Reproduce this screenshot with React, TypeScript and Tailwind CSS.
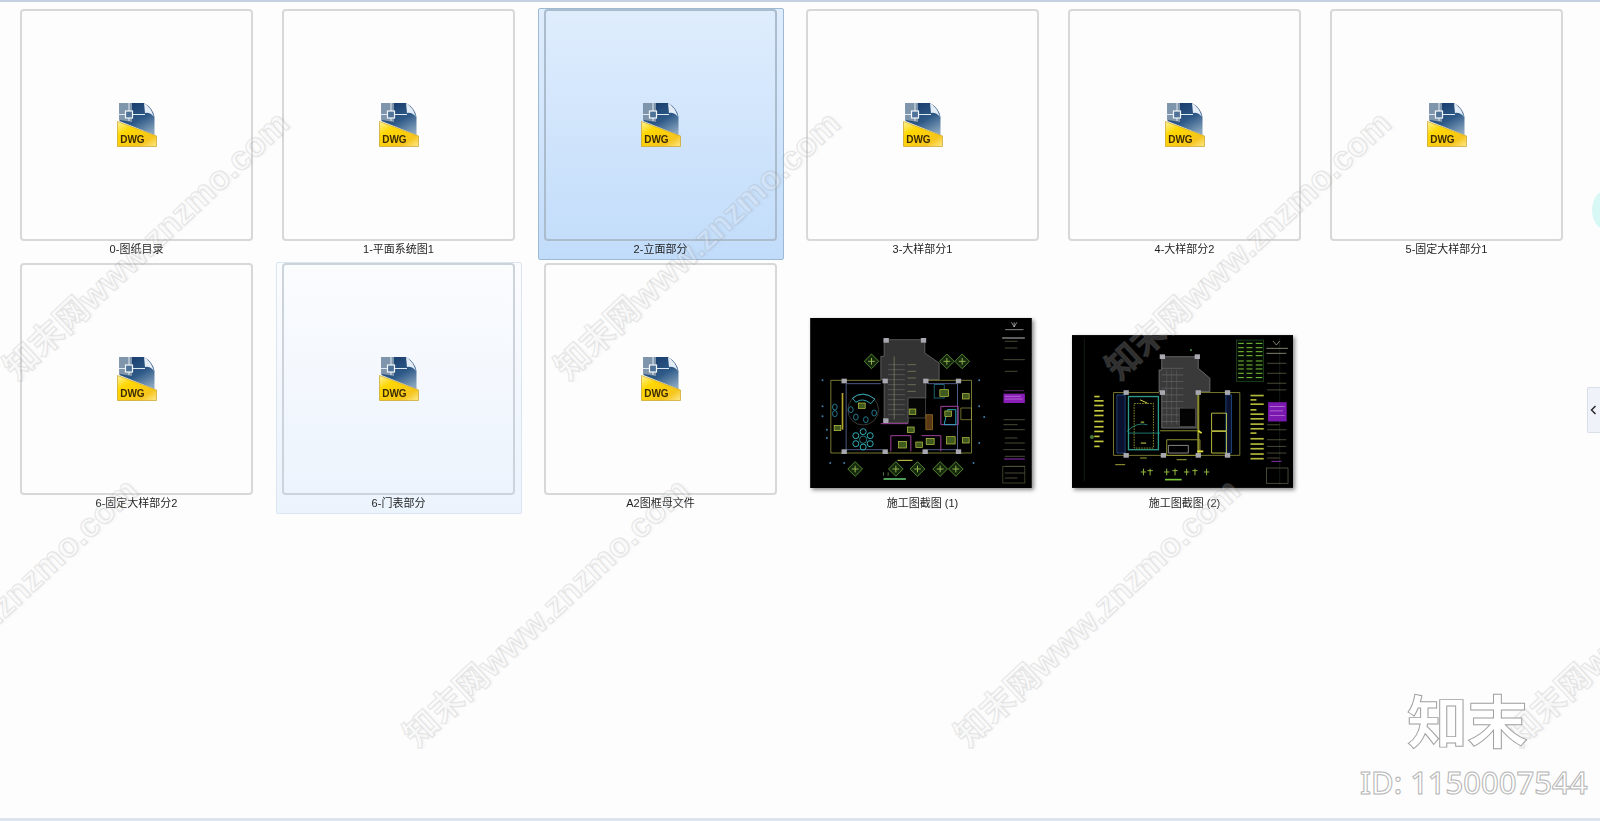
import React from "react";

type TileState = "normal" | "selected" | "hover";
type Item = { label: string; state?: TileState; image?: 1 | 2 };

const items: Item[] = [
  { label: "0-图纸目录" },
  { label: "1-平面系统图1" },
  { label: "2-立面部分", state: "selected" },
  { label: "3-大样部分1" },
  { label: "4-大样部分2" },
  { label: "5-固定大样部分1" },
  { label: "6-固定大样部分2" },
  { label: "6-门表部分", state: "hover" },
  { label: "A2图框母文件" },
  { label: "施工图截图 (1)", image: 1 },
  { label: "施工图截图 (2)", image: 2 },
];

const watermarkPositions = [
  "left-[146px] top-[245px]",
  "left-[697px] top-[245px]",
  "left-[1248px] top-[245px]",
  "left-[-5px] top-[612px]",
  "left-[546px] top-[612px]",
  "left-[1097px] top-[612px]",
  "left-[1648px] top-[612px]",
];

function DwgIcon() {
  return (
    <svg width="40" height="44" viewBox="0 0 40 44" className="blur-[0.35px]">
      <defs>
        <linearGradient id="dwgBlue" x1="0.2" y1="0" x2="0.8" y2="1">
          <stop offset="0" stopColor="#173a6b" />
          <stop offset="0.55" stopColor="#2f5a88" />
          <stop offset="1" stopColor="#8aa6bf" />
        </linearGradient>
        <linearGradient id="dwgYellow" x1="0" y1="0" x2="1" y2="1">
          <stop offset="0" stopColor="#fff3a0" />
          <stop offset="0.3" stopColor="#ffd700" />
          <stop offset="0.75" stopColor="#f6c51c" />
          <stop offset="1" stopColor="#fde98a" />
        </linearGradient>
      </defs>
      <path d="M2.5 0H27Q36 5 37.5 14V32L2.5 18Z" fill="url(#dwgBlue)" />
      <path d="M2.5 0H15V19L2.5 17Z" fill="#7e95ab" />
      <path d="M27 0Q34 4 37 14Q33 9 28 10Z" fill="#e4edf5" />
      <path d="M2 11.5H28M12 0V18" stroke="#dfe9f2" strokeWidth="1" fill="none" />
      <rect x="8.5" y="8" width="7" height="7" fill="#4f7398" stroke="#f3f7fb" strokeWidth="1.2" />
      <path d="M0.5 18.5L39.5 33V43.5H0.5Z" fill="url(#dwgYellow)" stroke="#c9a227" strokeWidth="0.7" />
      <text x="3.2" y="40" fontFamily="Liberation Sans, sans-serif" fontWeight="700" fontSize="10" fill="#3b2a05">
        DWG
      </text>
    </svg>
  );
}

const Diamond = ({ x, y, c = "#5f9a38" }: { x: number; y: number; c?: string }) => (
  <g>
    <path d={`M${x} ${y - 22}L${x + 22} ${y}L${x} ${y + 22}L${x - 22} ${y}Z`} fill="#16290e" stroke={c} strokeWidth="2.5" />
    <path d={`M${x - 10} ${y}H${x + 10}M${x} ${y - 10}V${y + 10}`} stroke="#8fb44c" strokeWidth="3" />
  </g>
);

const Furn = ({ x, y, w = 20, h = 16 }: { x: number; y: number; w?: number; h?: number }) => (
  <rect x={x - w / 2} y={y - h / 2} width={w} height={h} fill="#3f5a1c" stroke="#c8cf48" strokeWidth="2" />
);

const Col = ({ x, y }: { x: number; y: number }) => <rect x={x - 8} y={y - 7} width="16" height="14" fill="#a8a8b0" />;

function Cad1() {
  const lines = [95, 115, 150, 185, 330, 345, 360, 385, 400, 420, 440, 470, 490, 505];
  return (
    <svg width="222" height="170" viewBox="28 25 665 510" className="shadow-[2px_2px_4px_rgba(0,0,0,0.45)]">
      <rect x="28" y="25" width="665" height="510" fill="#000" />
      <g className="blur-[0.6px]">
        <path d="M250 90H372V130L415 160V210H375V265H322V340H250V210H240V140H250Z" fill="#333" stroke="#777" strokeWidth="2" />
        {[165, 180, 195, 210, 225, 240, 255, 270, 285, 300, 315].map((y) => (
          <path key={y} d={`M262 ${y}H312`} stroke="#666" strokeWidth="2" />
        ))}
        <path d="M280 140V330M320 165H345M320 185H345M320 205H345M320 225H345M320 245H345" stroke="#8a8a6a" strokeWidth="2" />
        <rect x="322" y="265" width="52" height="60" fill="#050505" stroke="#555" strokeWidth="2" />
        <path d="M90 212H240M378 212H512V430H90V212" fill="none" stroke="#8f8e3a" strokeWidth="2.5" />
        <path d="M136 222H240M380 222H470M136 222V420H245M380 420H470V222" fill="none" stroke="#5d6c9c" strokeWidth="2.5" />
        <path d="M240 342H322M270 378H330V425M270 378V425M362 378H420V425M420 290H472V345H420Z" fill="none" stroke="#a0409c" strokeWidth="3" />
        <path d="M480 295H512V330H480Z" fill="none" stroke="#a3a23f" strokeWidth="2" />
        <path d="M125 250V360" stroke="#b2a52a" strokeWidth="5" />
        <circle cx="187" cy="300" r="46" fill="none" stroke="#555" strokeWidth="2" />
        <path d="M155 265Q185 240 222 268L210 282Q185 262 165 278Z" fill="none" stroke="#2aa6b0" strokeWidth="3" />
        {[[150, 300], [165, 322], [195, 330], [220, 310], [102, 292], [102, 312]].map(([x, y], i) => (
          <ellipse key={i} cx={x} cy={y} rx="7" ry="9" fill="none" stroke="#2a8fa8" strokeWidth="2.5" />
        ))}
        {[[187, 366], [165, 378], [208, 378], [165, 402], [208, 402], [187, 412]].map(([x, y], i) => (
          <circle key={i} cx={x} cy={y} r="9" fill="none" stroke="#2fb0b8" strokeWidth="3" />
        ))}
        <circle cx="187" cy="390" r="11" fill="none" stroke="#2fb0b8" strokeWidth="2" />
        <rect x="400" y="225" width="30" height="40" fill="none" stroke="#2a8fa8" strokeWidth="2" />
        <path d="M440 300H465V345H430Z" fill="none" stroke="#2fa6c0" strokeWidth="3" />
        <path d="M375 315H395V360H375Z" fill="#5a3a14" stroke="#a87a2a" strokeWidth="2" />
        {[[183, 288], [110, 355], [430, 250, 26, 20], [495, 260], [335, 306], [330, 360], [305, 405, 24, 20], [355, 405], [388, 395, 24, 18], [450, 392, 26, 22], [495, 392], [442, 312]].map(
          ([x, y, w, h], i) => <Furn key={i} x={x} y={y} w={w} h={h} />,
        )}
        {[[212, 155], [438, 155], [484, 155], [163, 478], [285, 478], [350, 478], [418, 478], [465, 478]].map(([x, y], i) => (
          <Diamond key={i} x={x} y={y} />
        ))}
        {[[130, 214], [253, 214], [375, 214], [473, 214], [130, 426], [253, 426], [373, 426], [473, 426], [256, 92], [368, 92], [255, 333]].map(([x, y], i) => (
          <Col key={i} x={x} y={y} />
        ))}
        <path d="M290 452H335" stroke="#d6d94a" strokeWidth="3" />
        <path d="M248 508H315" stroke="#5fc06a" strokeWidth="5" />
        <path d="M248 498V488M262 498V488" stroke="#7ab050" strokeWidth="2" />
        {[[65, 212], [65, 290], [65, 320], [78, 360], [78, 385], [88, 460], [130, 460], [535, 212], [535, 290], [550, 322], [535, 400], [518, 460]].map(([x, y], i) => (
          <circle key={i} cx={x} cy={y} r="3" fill="#3f7faa" />
        ))}
        <path d="M632 38L640 52L648 38M640 38V52M613 60H668" stroke="#ccc" strokeWidth="2" fill="none" />
        {lines.map((y) => (
          <path key={y} d={`M${y % 3 === 0 ? 608 : 612} ${y}H${y % 2 === 0 ? 672 : 650}`} stroke="#6c6c50" strokeWidth="2" />
        ))}
        <path d="M604 85H672" stroke="#bbb" strokeWidth="3" />
        <path d="M610 243H670" stroke="#8a3aa0" strokeWidth="2" />
        <rect x="608" y="252" width="64" height="28" fill="#8a1fb8" />
        <path d="M612 260H660M612 268H665" stroke="#c88ae0" strokeWidth="2" />
        <path d="M610 448H672" stroke="#9a2fc0" strokeWidth="3" />
        <rect x="606" y="470" width="66" height="50" fill="none" stroke="#5a5a40" strokeWidth="2" />
      </g>
    </svg>
  );
}

function Cad2() {
  const rightRows = [212, 225, 238, 255, 268, 282, 298, 312, 325, 342, 358, 372, 388, 402];
  const leftRows = [215, 228, 242, 258, 272, 290, 306, 320, 335, 350, 365];
  const tableRows = [55, 68, 80, 92, 108, 120, 132, 145, 158];
  return (
    <svg width="221" height="153" viewBox="35 30 665 460" className="shadow-[2px_2px_4px_rgba(0,0,0,0.45)]">
      <rect x="35" y="30" width="665" height="460" fill="#000" />
      <g className="blur-[0.6px]">
        <path d="M72 40V470M660 40V480" stroke="#1c2a1c" strokeWidth="2" />
        <path d="M305 95H415V130L450 160V200H415V310H305V200H297V135H305Z" fill="#3a3a3a" stroke="#888" strokeWidth="2" />
        {[130, 150, 170, 190, 210, 230, 250, 270, 290].map((y) => (
          <path key={y} d={`M305 ${y}H370`} stroke="#777" strokeWidth="1.5" />
        ))}
        {[320, 335, 350].map((x) => (
          <path key={x} d={`M${x} 135V300`} stroke="#666" strokeWidth="1.5" />
        ))}
        <rect x="358" y="250" width="48" height="55" fill="#030303" stroke="#555" strokeWidth="2" />
        <path d="M160 203H297M415 203H540V392H160V203" fill="none" stroke="#8f8e3a" strokeWidth="2.5" />
        <rect x="205" y="215" width="90" height="160" fill="none" stroke="#2f9a8a" strokeWidth="4" />
        <rect x="222" y="236" width="58" height="134" fill="none" stroke="#c8c83a" strokeWidth="2" strokeDasharray="5 3" />
        <path d="M170 210V385H195V210ZM498 210H515V385H498Z" fill="#0a1230" stroke="#2a5fa0" strokeWidth="2" />
        <path d="M240 225L262 235M242 292H252M242 355H258" stroke="#d6d94a" strokeWidth="3" />
        <path d="M300 318H415M320 345H420V392H320Z" fill="none" stroke="#a8a83a" strokeWidth="2.5" />
        <path d="M325 362H385V385H325Z" fill="none" stroke="#c8c8c8" strokeWidth="2" />
        <path d="M455 265H500V318H455ZM455 320H500V385H455Z" fill="none" stroke="#d6d94a" strokeWidth="2.5" />
        <rect x="412" y="200" width="6" height="190" fill="#8a8a2a" />
        <path d="M415 318L425 325M412 380H430" stroke="#e6e63a" strokeWidth="5" />
        <path d="M200 320Q230 290 262 300M300 325H205" stroke="#2fb0a0" strokeWidth="2" fill="none" />
        {[[198, 203], [307, 203], [415, 203], [503, 203], [198, 392], [310, 392], [415, 392], [503, 392], [307, 95], [412, 95]].map(([x, y], i) => (
          <Col key={i} x={x} y={y} />
        ))}
        {leftRows.map((y) => (
          <path key={y} d={`M102 ${y}H${y % 2 ? 118 : 130}`} stroke="#c4c83a" strokeWidth="5" />
        ))}
        <circle cx="95" cy="337" r="6" fill="#4a7a3a" />
        {rightRows.map((y) => (
          <path key={y} d={`M572 ${y}H${y % 2 ? 590 : 612}`} stroke="#b2b83a" strokeWidth="5" />
        ))}
        <rect x="530" y="45" width="82" height="125" fill="#030a03" stroke="#2f6a2f" strokeWidth="1.5" />
        {tableRows.map((y) => (
          <path key={y} d={`M535 ${y}H552M560 ${y}H578M588 ${y}H608`} stroke="#7ac43a" strokeWidth="3" />
        ))}
        <path d="M640 48L650 60L660 48M620 70H685M620 85H680" stroke="#c0c0a0" strokeWidth="2" fill="none" />
        {[115, 145, 175, 195, 300, 315, 345, 365, 385, 400].map((y) => (
          <path key={y} d={`M622 ${y}H${y % 2 ? 680 : 660}`} stroke="#6c6c50" strokeWidth="2" />
        ))}
        <rect x="625" y="232" width="56" height="58" fill="#7a18b0" />
        <path d="M630 245H675M630 258H670M630 272H675" stroke="#c88ae0" strokeWidth="2" />
        <path d="M635 410H665" stroke="#8a2fb0" strokeWidth="3" />
        <rect x="620" y="430" width="65" height="46" fill="none" stroke="#6a6a50" strokeWidth="2" />
        {[250, 270, 320, 345, 380, 405, 440].map((x, i) => (
          <path key={x} d={`M${x - 8} ${i % 2 ? 438 : 442}H${x + 8}M${x} 432V452`} stroke="#93b83a" strokeWidth="3" />
        ))}
        <path d="M315 465H365" stroke="#7ac43a" strokeWidth="5" />
        <path d="M165 420H195M240 400H260M350 405H380" stroke="#a3a33a" strokeWidth="3" />
        <path d="M390 75H396" stroke="#4a8a4a" strokeWidth="5" />
      </g>
    </svg>
  );
}

function Tile({ item }: { item: Item }) {
  const state = item.state ?? "normal";
  const tileClass =
    state === "selected"
      ? "border-[#9db9d4] bg-gradient-to-b from-[#dfedfd] to-[#c1dcfa]"
      : state === "hover"
        ? "border-[#dbe6f3] bg-gradient-to-b from-[#fbfcfe] to-[#ebf3fd]"
        : "border-transparent";
  const thumbBorder = item.image
    ? "border-transparent"
    : state === "selected"
      ? "border-[#abbccd]"
      : state === "hover"
        ? "border-[#cdd3da]"
        : "border-[#d8d8d8]";
  return (
    <div className={`h-[252px] w-[246px] rounded-[2px] border pl-[5px] pr-[6px] ${tileClass}`}>
      <div
        className={`flex h-[232px] w-[233px] rounded-[4px] border-2 ${thumbBorder} ${
          item.image ? "items-end justify-center pb-[5px] pr-[4px]" : "items-center justify-center"
        }`}
      >
        {item.image === 1 ? <Cad1 /> : item.image === 2 ? <Cad2 /> : <DwgIcon />}
      </div>
      <div className="h-[18px] text-center text-[11px] leading-[17px] text-[#1f1f1f] blur-[0.25px]">{item.label}</div>
    </div>
  );
}

export default function App() {
  return (
    <div className="relative flex h-[821px] w-full flex-col overflow-hidden bg-[#fdfdfd] font-['Liberation_Sans','Noto_Sans_CJK_SC',sans-serif]">
      <div className="h-[2px] shrink-0 bg-[#c4d0e0]" />
      <div className="flex flex-1 flex-wrap content-start gap-x-4 gap-y-[2px] pl-[14px] pt-[6px]">
        {items.map((item) => (
          <Tile key={item.label} item={item} />
        ))}
      </div>
      <div className="h-[3px] shrink-0 bg-[#dde4f0]" />

      {watermarkPositions.map((pos) => (
        <div
          key={pos}
          className={`pointer-events-none absolute ${pos} -translate-x-1/2 -translate-y-1/2 -rotate-[43deg] whitespace-nowrap font-['Liberation_Sans','Noto_Sans_CJK_SC',sans-serif] text-[34px] font-bold leading-none text-white/20 [-webkit-text-stroke:1.5px_rgba(130,130,130,0.16)] [text-shadow:2px_2px_3px_rgba(0,0,0,0.03)]`}
        >
          知末网www.znzmo.com
        </div>
      ))}

      <div className="pointer-events-none absolute left-[1407px] top-[680px] origin-top scale-y-[0.93] whitespace-nowrap font-['Noto_Sans_CJK_SC',sans-serif] text-[61px] font-bold leading-[84px] tracking-[-1px] text-white [-webkit-text-stroke:1px_#a0a0a0]">
        知末
      </div>
      <div className="pointer-events-none absolute left-[1360px] top-[762px] whitespace-nowrap font-['Noto_Sans',sans-serif] text-[31px] font-medium leading-[40px] text-white [-webkit-text-stroke:1px_#b4b4b4]">
        ID: 1150007544
      </div>

      <div className="absolute right-[-22px] top-[190px] h-[40px] w-[30px] rounded-[50%] bg-[#d8f8f6]" />
      <div className="absolute right-0 top-[387px] flex h-[46px] w-[13px] items-center justify-start rounded-l-[2px] border border-r-0 border-[#d8dfe9] bg-[#eff2f9] pl-[2px]">
        <svg width="7" height="10" viewBox="0 0 7 10">
          <path d="M5.5 1L1.5 5L5.5 9" fill="none" stroke="#222" strokeWidth="1.4" />
        </svg>
      </div>
    </div>
  );
}
